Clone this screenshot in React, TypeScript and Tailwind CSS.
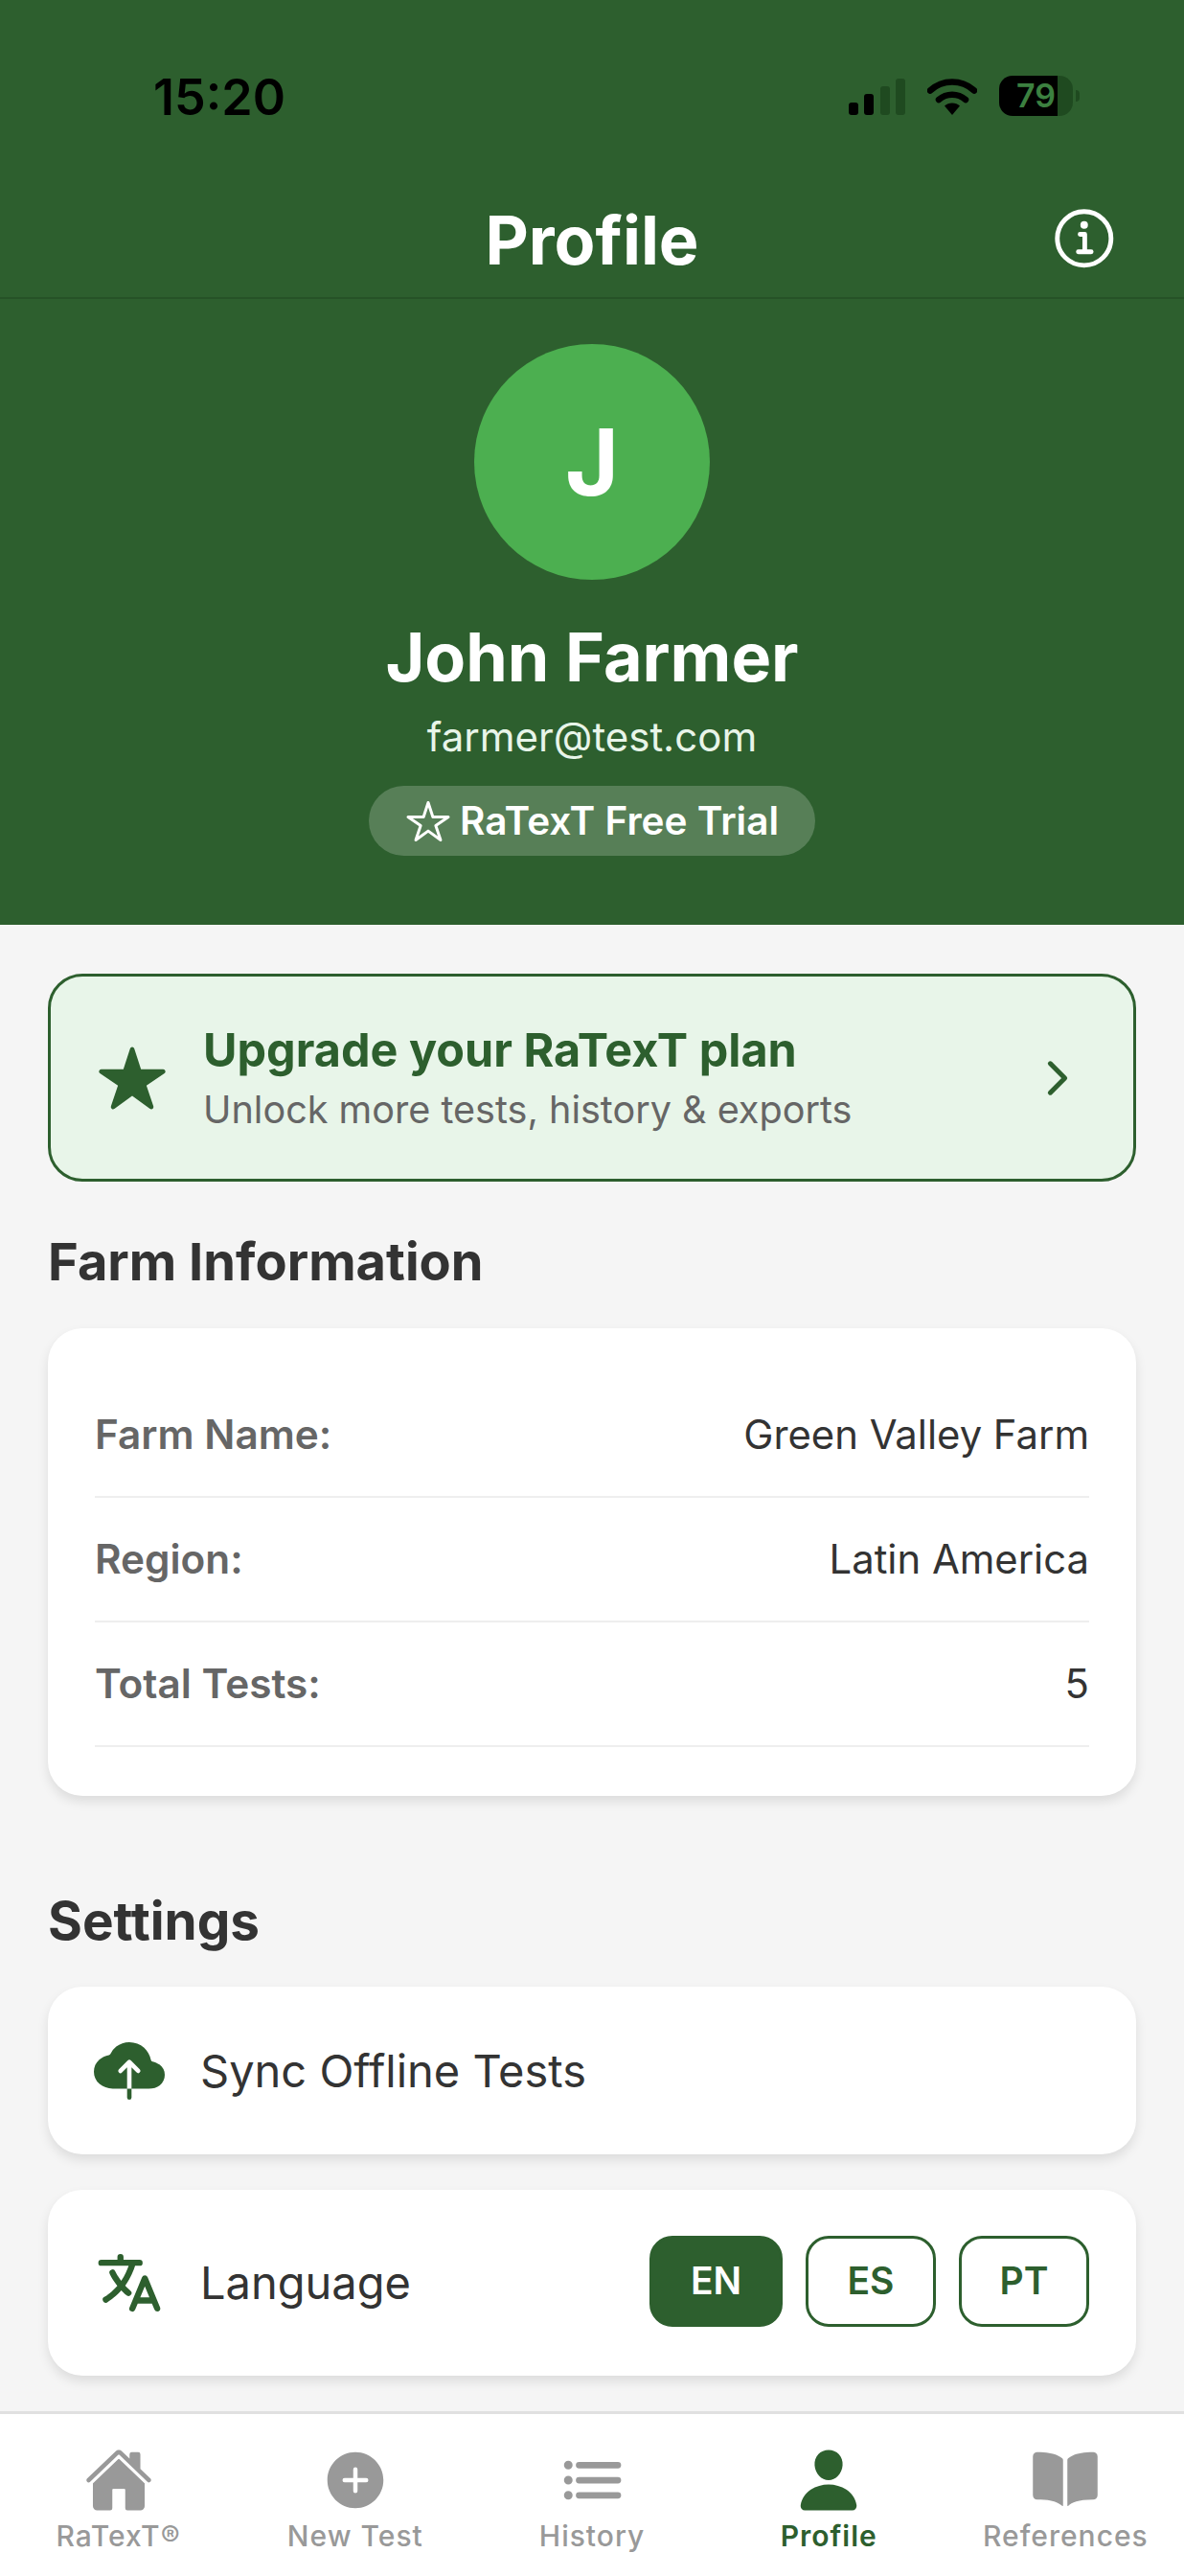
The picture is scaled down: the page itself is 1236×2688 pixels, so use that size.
import React from "react";
import {
  IoAddCircle,
  IoBook,
  IoChevronForward,
  IoCloudUpload,
  IoHome,
  IoInformationCircleOutline,
  IoLanguage,
  IoList,
  IoPerson,
  IoStar,
  IoStarOutline,
} from "react-icons/io5";

function StatusIcons() {
  return (
    <div className="flex items-center">
      <svg width="59" height="38" viewBox="0 0 59 38" className="mt-[2px]">
        <rect x="0" y="25" width="10" height="13" rx="3" fill="#000" />
        <rect x="16" y="16" width="10" height="22" rx="3" fill="#000" />
        <rect x="33" y="8" width="10" height="30" rx="3" fill="#1f4a20" />
        <rect x="49" y="0" width="10" height="38" rx="3" fill="#1f4a20" />
      </svg>
      <svg width="52" height="38" viewBox="0 0 52 38" className="ml-[23px] mt-[2px]">
        <path d="M3 12.5C16 0.5 36 0.5 49 12.5" fill="none" stroke="#000" strokeWidth="6.5" strokeLinecap="round" strokeLinejoin="round" />
        <path d="M12 22C20 15 32 15 40 22" fill="none" stroke="#000" strokeWidth="6.5" strokeLinecap="round" />
        <path d="M18 28.5C22 24.5 30 24.5 34 28.5L26 38Z" fill="#000" />
      </svg>
      <div className="ml-[23px] flex h-[42px] w-[77px] items-center justify-center rounded-[14px] bg-[linear-gradient(90deg,#000_61px,#1f4a20_61px)] text-[34px] font-semibold leading-none text-[#3c8040]">
        79
      </div>
      <div className="ml-[3px] h-[12px] w-[4px] rounded-r-full bg-[#1f4a20]" />
    </div>
  );
}

function InfoRow({ label, value }: { label: string; value: string }) {
  return (
    <div className="flex h-[130px] items-center justify-between border-b-[2px] border-[#eeeeee]">
      <span className="text-[42.3px] font-semibold text-[#666666]">{label}</span>
      <span className="text-[41.8px] text-[#333333]">{value}</span>
    </div>
  );
}

function NavItem({
  icon,
  label,
  active,
}: {
  icon: React.ReactNode;
  label: string;
  active?: boolean;
}) {
  return (
    <div className={`flex flex-1 flex-col items-center ${active ? "text-[#2d5f2e]" : "text-[#999999]"}`}>
      <div className="flex h-[72px] w-[72px] items-center justify-center">{icon}</div>
      <span className={`text-[30px] leading-[44px] tracking-[1px] ${active ? "font-semibold" : "font-medium"}`}>
        {label}
      </span>
    </div>
  );
}

function LangButton({ label, active }: { label: string; active?: boolean }) {
  return (
    <div
      className={`flex h-[95px] items-center justify-center rounded-[24px] border-[3px] border-[#2d5f2e] text-[39px] font-semibold ${
        active ? "w-[139px] bg-[#2d5f2e] text-white" : "w-[136px] text-[#2d5f2e]"
      }`}
    >
      {label}
    </div>
  );
}

export default function App() {
  return (
    <div className="flex h-[2688px] w-[1236px] flex-col overflow-hidden bg-[#f5f5f5] font-['Inter','Liberation_Sans',sans-serif]">
      <div className="bg-[#2d5f2e]">
        <div className="flex h-[312px] flex-col border-b-[2px] border-[#265227]">
          <div className="flex h-[200px] items-center justify-between pl-[160px] pr-[109px]">
            <span className="pt-[3px] text-[52px] font-semibold leading-none text-black">15:20</span>
            <StatusIcons />
          </div>
          <div className="flex h-[100px] items-center justify-between px-[64px]">
            <span className="w-[78px]" />
            <span className="pt-[2px] text-[70px] font-bold leading-none text-white">Profile</span>
            <IoInformationCircleOutline className="h-[78px] w-[78px] text-white" />
          </div>
        </div>
        <div className="flex h-[653px] flex-col items-center pt-[47px]">
          <div className="flex h-[246px] w-[246px] items-center justify-center rounded-full bg-[#4caf50] text-[96px] font-bold text-white">
            J
          </div>
          <div className="mt-[37px] text-[70px] font-bold leading-[88px] text-white">John Farmer</div>
          <div className="mt-[9px] text-[42px] leading-[60px] text-[#e8f5e9]">farmer@test.com</div>
          <div className="mt-[21px] flex h-[73px] w-[466px] items-center justify-center gap-[9px] rounded-full bg-white/20 text-[40.5px] font-semibold text-white">
            <IoStarOutline className="h-[48px] w-[48px]" />
            <span className="pt-[2px]">RaTexT Free Trial</span>
          </div>
        </div>
      </div>

      <div className="flex-1 overflow-hidden px-[50px]">
        <div className="mt-[51px] flex h-[217px] items-center rounded-[36px] border-[3px] border-[#2d5f2e] bg-[#e8f5e9] pl-[48px] pr-[52px]">
          <IoStar className="h-[74px] w-[74px] shrink-0 text-[#2d5f2e]" />
          <div className="ml-[37px] flex-1 pt-[5px]">
            <div className="text-[48.5px] font-bold leading-[60px] text-[#2d5f2e]">Upgrade your RaTexT plan</div>
            <div className="pt-[2px] text-[39.6px] leading-[60px] text-[#666666]">Unlock more tests, history &amp; exports</div>
          </div>
          <IoChevronForward className="h-[54px] w-[54px] text-[#2d5f2e]" />
        </div>

        <h2 className="mt-[50px] text-[54.2px] font-bold leading-[66px] text-[#333333]">Farm Information</h2>
        <div className="mt-[37px] rounded-[36px] bg-white px-[49px] pb-[51px] pt-[47px] shadow-[0_6px_12px_rgba(0,0,0,0.1)]">
          <InfoRow label="Farm Name:" value="Green Valley Farm" />
          <InfoRow label="Region:" value="Latin America" />
          <InfoRow label="Total Tests:" value="5" />
        </div>

        <h2 className="mt-[97px] text-[54.8px] font-bold leading-[66px] text-[#333333]">Settings</h2>
        <div className="mt-[36px] flex h-[175px] items-center rounded-[36px] bg-white pl-[48px] shadow-[0_6px_12px_rgba(0,0,0,0.1)]">
          <IoCloudUpload className="h-[74px] w-[74px] text-[#2d5f2e]" />
          <span className="ml-[37px] pt-[1px] text-[47px] text-[#333333]">Sync Offline Tests</span>
        </div>
        <div className="mt-[37px] flex h-[194px] items-center justify-between rounded-[36px] bg-white pl-[48px] pr-[49px] shadow-[0_6px_12px_rgba(0,0,0,0.1)]">
          <div className="flex items-center">
            <IoLanguage className="h-[74px] w-[74px] text-[#2d5f2e]" />
            <span className="ml-[37px] pt-[1px] text-[47px] text-[#333333]">Language</span>
          </div>
          <div className="mb-[3px] flex gap-[24px]">
            <LangButton label="EN" active />
            <LangButton label="ES" />
            <LangButton label="PT" />
          </div>
        </div>
      </div>

      <div className="flex h-[172px] border-t-[3px] border-[#e0e0e0] bg-white pt-[33px]">
        <NavItem label="RaTexT®" icon={<IoHome className="h-[78px] w-[78px]" />} />
        <NavItem label="New Test" icon={<IoAddCircle className="h-[74px] w-[74px]" />} />
        <NavItem label="History" icon={<IoList className="h-[78px] w-[78px]" />} />
        <NavItem label="Profile" active icon={<IoPerson className="h-[78px] w-[78px]" />} />
        <NavItem label="References" icon={<IoBook className="h-[78px] w-[78px]" />} />
      </div>
    </div>
  );
}
